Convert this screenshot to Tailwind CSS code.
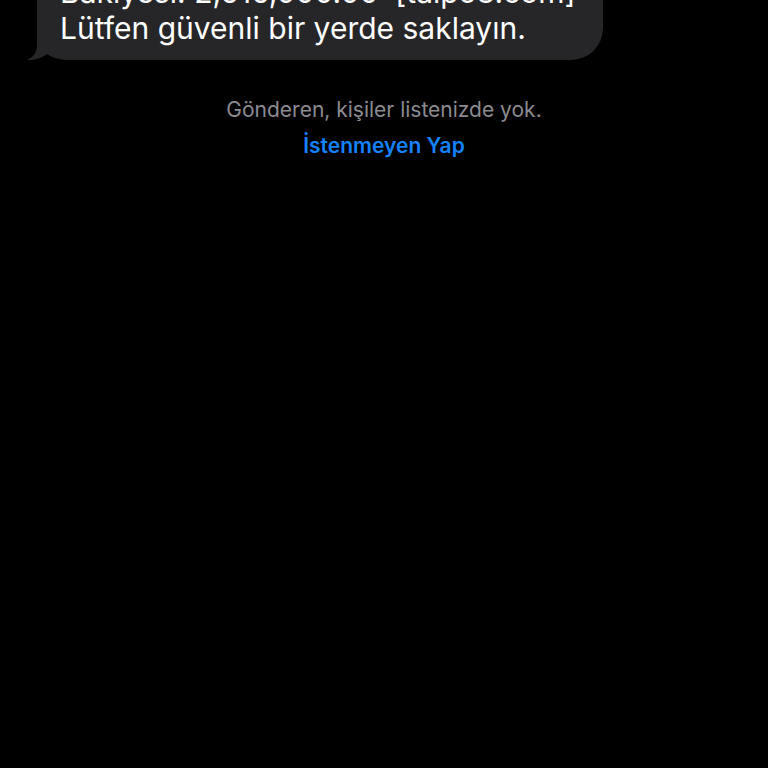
<!DOCTYPE html>
<html lang="tr">
<head>
    <meta charset="UTF-8">
    <meta name="viewport" content="width=device-width, initial-scale=1.0">
    <title>Mesajlar</title>
    <script src="https://cdn.jsdelivr.net/npm/@tailwindcss/browser@4"></script>
</head>
<body class="bg-black min-h-screen overflow-hidden font-['Inter',sans-serif]">

    <main class="flex flex-col">
        <!-- Gelen mesaj -->
        <div class="relative self-start ml-[37px] -mt-10 pt-[14px] pb-[14px] pl-[23px] pr-7 rounded-[32px] rounded-bl-none bg-[#262628]">
            <!-- Balon kuyruğu -->
            <svg class="absolute -left-[10px] bottom-0" width="50" height="24" viewBox="0 0 50 24" aria-hidden="true">
                <path d="M10 24V0h40v24z" fill="#000"/>
                <path d="M10 0v8C10 16 7 21 0 24C8 24.500 15 22 20 18C26 22 34 24 43 24H50V0Z" fill="#262628"/>
            </svg>
            <p class="relative text-[30px] leading-9 text-white whitespace-nowrap">
                Bakiyesi: 2,616,000.00 &nbsp;[taipo8.com]<br>
                Lütfen güvenli bir yerde saklayın.
            </p>
        </div>

        <!-- Bilinmeyen gönderen uyarısı -->
        <div class="mt-8 flex flex-col items-center text-[21px]">
            <p class="leading-9 text-[#8b8b90]">Gönderen, kişiler listenizde yok.</p>
            <button type="button" class="leading-9 font-semibold text-[#1582fb]">İstenmeyen Yap</button>
        </div>
    </main>

</body>
</html>
